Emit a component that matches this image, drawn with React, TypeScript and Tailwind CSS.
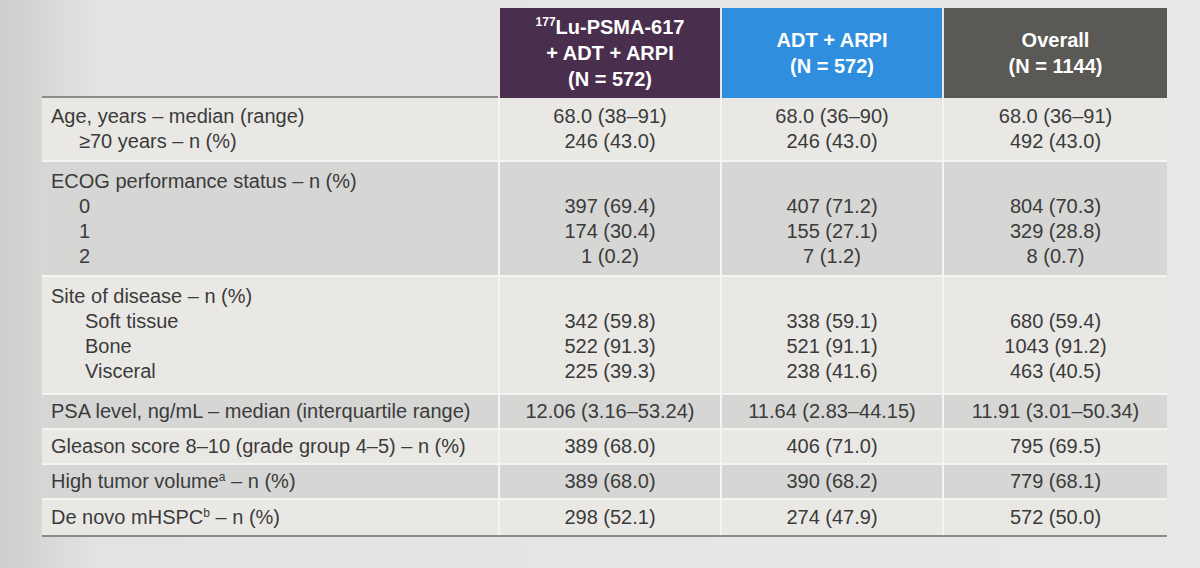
const headers = [
  {
    bg: 'bg-[#4a2e4d]',
    lines: [
      <>
        <sup className="text-[12px] font-bold relative top-[-8px]">177</sup>Lu-PSMA-617
      </>,
      '+ ADT + ARPI',
      '(N = 572)',
    ],
  },
  { bg: 'bg-[#2f8fde]', lines: ['ADT + ARPI', '(N = 572)'] },
  { bg: 'bg-[#5b5955]', lines: ['Overall', '(N = 1144)'] },
];

type Row = {
  label: { text: React.ReactNode; indent?: number }[];
  cols: string[][];
  dark: boolean;
  pad: string;
};

const rows: Row[] = [
  {
    label: [{ text: 'Age, years – median (range)' }, { text: '≥70 years – n (%)', indent: 1 }],
    cols: [
      ['68.0 (38–91)', '246 (43.0)'],
      ['68.0 (36–90)', '246 (43.0)'],
      ['68.0 (36–91)', '492 (43.0)'],
    ],
    dark: false,
    pad: 'pt-[6px] pb-[6px]',
  },
  {
    label: [
      { text: 'ECOG performance status – n (%)' },
      { text: '0', indent: 1 },
      { text: '1', indent: 1 },
      { text: '2', indent: 1 },
    ],
    cols: [
      ['', '397 (69.4)', '174 (30.4)', '1 (0.2)'],
      ['', '407 (71.2)', '155 (27.1)', '7 (1.2)'],
      ['', '804 (70.3)', '329 (28.8)', '8 (0.7)'],
    ],
    dark: true,
    pad: 'pt-[7px] pb-[6px]',
  },
  {
    label: [
      { text: 'Site of disease – n (%)' },
      { text: 'Soft tissue', indent: 2 },
      { text: 'Bone', indent: 2 },
      { text: 'Visceral', indent: 2 },
    ],
    cols: [
      ['', '342 (59.8)', '522 (91.3)', '225 (39.3)'],
      ['', '338 (59.1)', '521 (91.1)', '238 (41.6)'],
      ['', '680 (59.4)', '1043 (91.2)', '463 (40.5)'],
    ],
    dark: false,
    pad: 'pt-[7px] pb-[9px]',
  },
  {
    label: [{ text: 'PSA level, ng/mL – median (interquartile range)' }],
    cols: [['12.06 (3.16–53.24)'], ['11.64 (2.83–44.15)'], ['11.91 (3.01–50.34)']],
    dark: true,
    pad: 'py-[4px]',
  },
  {
    label: [{ text: 'Gleason score 8–10 (grade group 4–5) – n (%)' }],
    cols: [['389 (68.0)'], ['406 (71.0)'], ['795 (69.5)']],
    dark: false,
    pad: 'py-[4px]',
  },
  {
    label: [
      {
        text: (
          <>
            High tumor volume<sup className="text-[12px] relative top-[-7px]">a</sup> – n (%)
          </>
        ),
      },
    ],
    cols: [['389 (68.0)'], ['390 (68.2)'], ['779 (68.1)']],
    dark: true,
    pad: 'py-[4px]',
  },
  {
    label: [
      {
        text: (
          <>
            De novo mHSPC<sup className="text-[12px] relative top-[-7px]">b</sup> – n (%)
          </>
        ),
      },
    ],
    cols: [['298 (52.1)'], ['274 (47.9)'], ['572 (50.0)']],
    dark: false,
    pad: 'pt-[5px] pb-[5px]',
  },
];

const grid = 'grid grid-cols-[456px_220px_220px_223px] gap-x-[2px]';

export default function App() {
  return (
    <div
      className="w-[1200px] h-[568px] overflow-hidden bg-gradient-to-r from-[#cdcdcb] via-[#e3e3e1] via-[8%] to-[#e8e8e6] text-[#3b3b3b] text-[20px] leading-[25px]"
      style={{ fontFamily: '"Liberation Sans", Arial, sans-serif' }}
    >
      <div className="pl-[42px] pt-[8px] w-[1167px]">
        <div className={grid}>
          <div className="border-b-2 border-[#8c8c8a]" />
          {headers.map((h, i) => (
            <div
              key={i}
              className={`${h.bg} h-[90px] flex flex-col items-center justify-center text-white font-bold text-[20px] leading-[26px] text-center`}
            >
              {h.lines.map((l, j) => (
                <div key={j}>{l}</div>
              ))}
            </div>
          ))}
        </div>

        <div className="flex flex-col gap-y-[2px] bg-[#f4f4f2] border-b-2 border-[#8a8a88]">
          {rows.map((r, i) => (
            <div key={i} className={grid}>
              <div className={`${r.dark ? 'bg-[#d6d6d4]' : 'bg-[#e9e8e5]'} ${r.pad} pl-[9px]`}>
                {r.label.map((l, j) => (
                  <div
                    key={j}
                    className={l.indent === 2 ? 'pl-[34px]' : l.indent === 1 ? 'pl-[28px]' : ''}
                  >
                    {l.text}
                  </div>
                ))}
              </div>
              {r.cols.map((c, k) => (
                <div
                  key={k}
                  className={`${r.dark ? 'bg-[#d6d6d4]' : 'bg-[#e9e8e5]'} ${r.pad} text-center`}
                >
                  {c.map((v, j) => (
                    <div key={j} className="h-[25px]">
                      {v}
                    </div>
                  ))}
                </div>
              ))}
            </div>
          ))}
        </div>
      </div>
    </div>
  );
}
